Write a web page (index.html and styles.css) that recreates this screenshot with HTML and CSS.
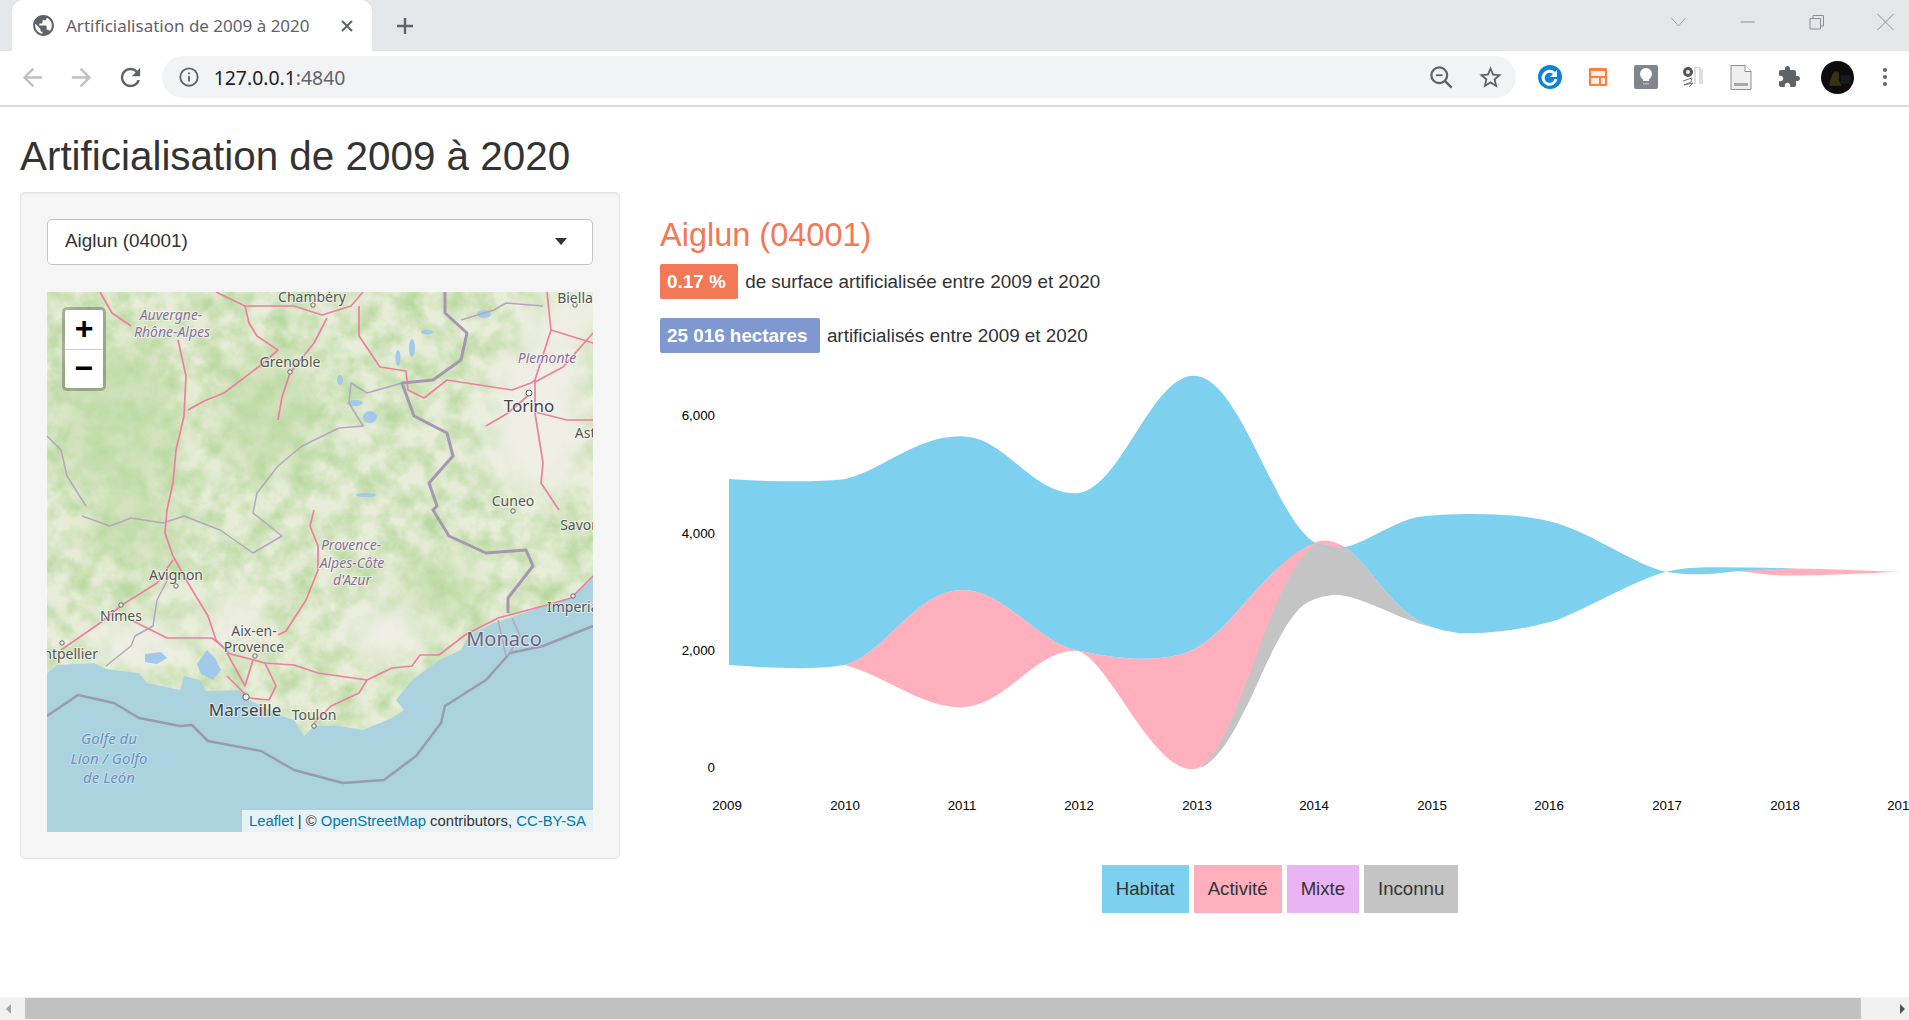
FILE: index.html
```html
<!DOCTYPE html>
<html>
  <head>
    <meta charset="utf-8">
    <title>Artificialisation de 2009 à 2020</title>
    <link rel="stylesheet" href="styles.css">
  </head>
  <body>
    <div class="browser">
      <div class="tabstrip">
        <div class="tab">
          <svg class="favicon" viewBox="0 0 24 24"><path fill="#5f6368" d="M12 2C6.48 2 2 6.48 2 12s4.48 10 10 10 10-4.48 10-10S17.52 2 12 2zm-1 17.93c-3.95-.49-7-3.85-7-7.93 0-.62.08-1.21.21-1.79L9 15v1c0 1.1.9 2 2 2v1.93zm6.9-2.54c-.26-.81-1-1.39-1.9-1.39h-1v-3c0-.55-.45-1-1-1H8v-2h2c.55 0 1-.45 1-1V7h2c1.1 0 2-.9 2-2v-.41c2.93 1.19 5 4.06 5 7.41 0 2.08-.8 3.97-2.1 5.39z"/></svg>
          <span class="tab-title">Artificialisation de 2009 à 2020</span>
          <svg class="tab-close" viewBox="0 0 14 14"><path d="M2 2l10 10M12 2L2 12" stroke="#5f6368" stroke-width="2" fill="none"/></svg>
        </div>
        <svg class="new-tab" viewBox="0 0 20 20"><path d="M10 2v16M2 10h16" stroke="#5f6368" stroke-width="2.4" fill="none"/></svg>
        <div class="window-controls">
          <svg viewBox="0 0 16 16"><path d="M1 4l7 8 7-8" stroke="#9aa0a6" fill="none"/></svg>
          <svg viewBox="0 0 16 16"><path d="M1 8h14" stroke="#8a8f94" fill="none"/></svg>
          <svg viewBox="0 0 16 16"><path d="M1.5 4.5h10.500v10.500h-10.500zM4.500 4.500v-3h10.500v10.500h-3" stroke="#8a8f94" fill="none"/></svg>
          <svg viewBox="0 0 16 16"><path d="M0 0l16 16M16 0L0 16" stroke="#8a8f94" fill="none"/></svg>
        </div>
      </div>

      <div class="toolbar">
        <div class="nav-btn"><svg viewBox="0 0 24 24"><path fill="#bdc1c6" d="M20 11H7.830l5.590-5.590L12 4l-8 8 8 8 1.410-1.410L7.830 13H20v-2z"/></svg></div>
        <div class="nav-btn"><svg viewBox="0 0 24 24"><path fill="#bdc1c6" d="M4 11h12.170l-5.590-5.590L12 4l8 8-8 8-1.410-1.410L16.170 13H4v-2z"/></svg></div>
        <div class="nav-btn"><svg viewBox="0 0 24 24"><path fill="#5f6368" d="M17.650 6.350C16.200 4.900 14.210 4 12 4c-4.420 0-7.990 3.580-7.990 8s3.570 8 7.990 8c3.730 0 6.840-2.550 7.730-6h-2.080c-.82 2.330-3.040 4-5.650 4-3.310 0-6-2.690-6-6s2.690-6 6-6c1.660 0 3.140.69 4.220 1.780L13 11h7V4l-2.350 2.350z"/></svg></div>
        <div class="omnibox">
          <svg class="info-icon" viewBox="0 0 24 24"><circle cx="12" cy="12" r="9.500" stroke="#5f6368" stroke-width="2" fill="none"/><path d="M11 11h2v6h-2zM11 7h2v2h-2z" fill="#5f6368"/></svg>
          <span class="url">127.0.0.1<span class="url-port">:4840</span></span>
          <span class="omni-spacer"></span>
          <svg class="omni-icon" viewBox="0 0 24 24"><circle cx="10" cy="10" r="7" stroke="#5f6368" stroke-width="2" fill="none"/><path d="M15 15l6 6" stroke="#5f6368" stroke-width="2.200"/><path d="M7 9.200h6v1.600H7z" fill="#5f6368"/></svg>
          <svg class="omni-icon" viewBox="0 0 24 24"><path fill="#5f6368" d="M22 9.240l-7.190-.62L12 2 9.190 8.630 2 9.240l5.460 4.730L5.820 21 12 17.270 18.180 21l-1.630-7.030L22 9.240zM12 15.400l-3.760 2.270 1-4.280-3.320-2.880 4.380-.38L12 6.100l1.710 4.040 4.380.38-3.320 2.880 1 4.280L12 15.400z"/></svg>
        </div>
        <div class="ext-btn"><svg viewBox="0 0 24 28"><circle cx="12" cy="14" r="12" fill="#0a84d8"/><path d="M18 16a6.500 6.500 0 1 1-2-6" stroke="#fff" stroke-width="3" fill="none"/><path d="M19 7v7h-7z" fill="#fff"/></svg></div>
        <div class="ext-btn"><svg viewBox="0 0 24 28"><rect x="3" y="5" width="18" height="18" rx="1" fill="#fb7f3f"/><path d="M5 8h14v5H5zM5 15h8v6H5zM15 15h4v6h-4z" fill="#fdeee6"/></svg></div>
        <div class="ext-btn"><svg viewBox="0 0 24 28"><rect y="2" width="24" height="24" rx="2" fill="#80868b"/><circle cx="12" cy="11" r="6" fill="#fff"/><path d="M9 15h6v3H9z" fill="#fff"/><path d="M9 20h6v1.500H9z" fill="#b4b8bb"/></svg></div>
        <div class="ext-btn"><svg viewBox="0 0 24 28"><circle cx="7" cy="9" r="5" fill="#555"/><circle cx="7" cy="9" r="2" fill="#eee"/><path d="M13 4h6l3 3v14h-9z" fill="#ddd"/><path d="M15 5h3v16h-3z" fill="#fff"/><path d="M2 18l9-3-1 4-7 3 9-2-4 4" stroke="#777" fill="none"/></svg></div>
        <div class="ext-btn"><svg viewBox="0 0 24 28"><path d="M2 2.500h14l6 6v18H2z" fill="#efefef" stroke="#8f8f8f"/><path d="M5 20h14v3H5z" fill="#a8a8a8"/><path d="M16 2.500v6h6" fill="#fff" stroke="#8f8f8f"/></svg></div>
        <div class="ext-btn"><svg viewBox="0 0 24 24"><path fill="#5f6368" d="M20.500 11H19V7c0-1.100-.9-2-2-2h-4V3.500C13 2.120 11.880 1 10.500 1S8 2.120 8 3.500V5H4c-1.100 0-1.990.9-1.990 2v3.800H3.500c1.490 0 2.700 1.210 2.700 2.700s-1.210 2.700-2.700 2.700H2V20c0 1.100.9 2 2 2h3.800v-1.500c0-1.490 1.210-2.700 2.700-2.700 1.490 0 2.700 1.210 2.700 2.700V22H17c1.100 0 2-.9 2-2v-4h1.500c1.380 0 2.500-1.120 2.500-2.500S21.880 11 20.500 11z"/></svg></div>
        <div class="ext-btn"><svg class="avatar" viewBox="0 0 32 32"><circle cx="16" cy="16" r="16" fill="#0c0c0c"/><path d="M8 24c1-6 3-14 7-14 3 0 3 5 2 8l3 6z" fill="#3a3014"/><path d="M19 14h10v8H19z" fill="#121c26"/></svg></div>
        <div class="ext-btn"><svg viewBox="0 0 24 24"><circle cx="12" cy="5" r="2" fill="#5f6368"/><circle cx="12" cy="12" r="2" fill="#5f6368"/><circle cx="12" cy="19" r="2" fill="#5f6368"/></svg></div>
      </div>

      <div class="page">
        <h1>Artificialisation de 2009 à 2020</h1>
        <div class="main">
          <div class="side-card">
            <div class="commune-select">
              <span>Aiglun (04001)</span>
              <span class="caret"></span>
            </div>
            <div class="map">
              <svg class="map-svg" viewBox="0 0 546 540">
                <defs>
                  <clipPath id="land-clip">
                    <path d="M0 0H546V283L524 306 500 313 447 331 422 343 414 358 392 368 365 388 349 408 357 418 345 426 316 438 292 434 267 434 257 444 247 428 235 424 202 408 194 398 159 399 153 388 137 384 133 398 100 391 92 381 59 377 47 371 10 373 0 381Z"/>
                  </clipPath>
                  <filter id="terrain" x="0" y="0" width="100%" height="100%" color-interpolation-filters="sRGB">
                    <feTurbulence type="fractalNoise" baseFrequency="0.045" numOctaves="5" seed="7"/>
                    <feColorMatrix values="0 0 0 0 0.72  0 0 0 0 0.85  0 0 0 0 0.62  1.900 0 0 0 -0.600"/>
                  </filter>
                  <filter id="soft"><feGaussianBlur stdDeviation="0.45"/></filter>
                  <filter id="fog"><feGaussianBlur stdDeviation="16"/></filter>
                </defs>

                <rect width="546" height="540" fill="#aad3df"/>
                <g clip-path="url(#land-clip)">
                  <rect width="546" height="540" fill="#e8edd9"/>
                  <g filter="url(#fog)" fill="#c5dcab" opacity="0.7">
                    <ellipse cx="70" cy="130" rx="60" ry="80"/>
                    <ellipse cx="220" cy="120" rx="50" ry="60"/>
                    <ellipse cx="90" cy="240" rx="50" ry="30"/>
                    <ellipse cx="390" cy="300" rx="40" ry="30"/>
                  </g>
                  <rect width="546" height="540" filter="url(#terrain)"/>
                  <g filter="url(#fog)" fill="#f0efe6">
                    <ellipse cx="490" cy="130" rx="50" ry="80"/>
                    <ellipse cx="520" cy="30" rx="40" ry="30"/>
                    <ellipse cx="90" cy="350" rx="50" ry="24"/>
                    <ellipse cx="340" cy="340" rx="44" ry="26"/>
                    <ellipse cx="190" cy="330" rx="30" ry="30"/>
                  </g>
                </g>

                <g class="map-water" filter="url(#soft)">
                  <path d="M150 372l10-14 8 8 6 12-8 10-12-6z"/>
                  <path d="M98 362l16-2 6 6-10 6-12-2z"/>
                  <ellipse cx="365" cy="56" rx="3" ry="9"/>
                  <ellipse cx="351" cy="66" rx="2.500" ry="8"/>
                  <ellipse cx="380" cy="40" rx="6" ry="2.500"/>
                  <ellipse cx="308" cy="111" rx="8" ry="3"/>
                  <ellipse cx="323" cy="125" rx="7" ry="6"/>
                  <ellipse cx="437" cy="22" rx="7" ry="4"/>
                  <ellipse cx="293" cy="88" rx="3" ry="5"/>
                  <ellipse cx="319" cy="203" rx="10" ry="2"/>
                </g>

                <g class="map-border-thin" filter="url(#soft)">
                  <path d="M355 91L320 101 304 91 302 111 316 134 292 136 255 154 231 174 210 201 206 221 235 244 206 261 173 238 137 224 116 231 84 226 63 234 35 224"/>
                  <path d="M0 144L14 158 20 184 39 214"/>
                  <path d="M124 281L110 308 106 334 88 344 84 354 59 374"/>
                  <path d="M414 28L447 18 459 11 496 14"/>
                  <path d="M0 424L31 403 67 411 92 426 133 434 145 433 161 449 214 459 247 478 296 491 337 488 369 464 394 431 398 414 439 388 463 361 496 354 546 334" class="map-sea-line"/>
                  <path d="M451 328L459 364M465 326L473 344 461 364"/>
                </g>

                <g class="map-border" filter="url(#soft)">
                  <path d="M398 0L398 21 420 41 414 68 386 88 355 91 367 124 400 141 406 164 382 191 390 214 386 218 402 244 439 261 479 258 486 274 461 306 461 321"/>
                </g>

                <g class="map-roads" filter="url(#soft)">
                  <path d="M53 0L65 21 84 34"/>
                  <path d="M169 0L198 14 247 14 275 23 304 14 316 0"/>
                  <path d="M198 14L202 31 210 44 231 58 214 73 177 101 157 109 141 118"/>
                  <path d="M280 26L267 51 243 81 235 105 231 128"/>
                  <path d="M312 14L312 44 333 75 359 79 361 98 377 106 400 88 465 98 484 91 488 88 504 38 500 0"/>
                  <path d="M131 48L139 84 137 124 129 158 126 191 120 218 118 241 126 264 141 291 161 324 169 348 182 361"/>
                  <path d="M488 88L488 121 496 171 494 191 512 218"/>
                  <path d="M439 134L461 121 484 101M488 120L520 128 546 128M488 90L516 75 546 41M504 38L546 51"/>
                  <path d="M14 358L53 331 75 313 110 291 126 268"/>
                  <path d="M86 329L120 346 165 346 180 358"/>
                  <path d="M231 343L239 339 259 308 271 278 271 254 263 234 267 218"/>
                  <path d="M180 361L218 371 247 373 271 381 320 388 345 376 365 374 373 363 392 363 418 343 451 326 500 313 524 306 546 284"/>
                  <path d="M320 388L312 401 284 414 267 431"/>
                  <path d="M180 361L198 394 206 368M218 371L229 394 222 408 202 406 180 384"/>
                </g>

                <g class="map-dots">
                  <circle cx="266" cy="13" r="2.200"/><circle cx="528" cy="13" r="2.200"/>
                  <circle cx="243" cy="80" r="2.200"/><circle cx="482" cy="101" r="3"/>
                  <circle cx="129" cy="294" r="2.200"/><circle cx="74" cy="313" r="2.200"/>
                  <circle cx="15" cy="351" r="2.200"/><circle cx="208" cy="364" r="2.200"/>
                  <circle cx="199" cy="405" r="3.200"/><circle cx="267" cy="434" r="2.200"/>
                  <circle cx="526" cy="304" r="2.200"/><circle cx="466" cy="219" r="2.200"/>
                </g>

                <g class="map-city">
                  <text x="265" y="10">Chambéry</text>
                  <text x="528" y="11">Biella</text>
                  <text x="243" y="75">Grenoble</text>
                  <text x="466" y="214">Cuneo</text>
                  <text x="540" y="146">Asti</text>
                  <text x="537" y="238">Savona</text>
                  <text x="129" y="288">Avignon</text>
                  <text x="74" y="329">Nîmes</text>
                  <text x="207" y="344">Aix-en-</text>
                  <text x="207" y="360">Provence</text>
                  <text x="51" y="367" class="map-end">Montpellier</text>
                  <text x="500" y="320" class="map-start">Imperia</text>
                  <text x="267" y="428">Toulon</text>
                  <text x="482" y="120" class="map-city-big">Torino</text>
                  <text x="198" y="424" class="map-city-big">Marseille</text>
                  <text x="457" y="354" class="map-monaco">Monaco</text>
                </g>
                <g class="map-region">
                  <text x="124" y="28">Auvergne-</text>
                  <text x="125" y="45">Rhône-Alpes</text>
                  <text x="500" y="71">Piemonte</text>
                  <text x="304" y="258">Provence-</text>
                  <text x="305" y="276">Alpes-Côte</text>
                  <text x="305" y="293">d'Azur</text>
                </g>
                <g class="map-sea">
                  <text x="62" y="452">Golfe du</text>
                  <text x="62" y="472">Lion / Golfo</text>
                  <text x="62" y="491">de León</text>
                </g>
              </svg>
              <div class="zoom-control">
                <div class="zoom-btn">+</div>
                <div class="zoom-btn">−</div>
              </div>
              <div class="attribution"><a>Leaflet</a> | © <a>OpenStreetMap</a> contributors, <a>CC-BY-SA</a></div>
            </div>
          </div>

          <div class="content">
            <h3>Aiglun (04001)</h3>
            <div class="stat"><span class="badge badge-coral">0.17 %</span>de surface artificialisée entre 2009 et 2020</div>
            <div class="stat"><span class="badge badge-blue">25 016 hectares</span>artificialisés entre 2009 et 2020</div>

            <svg class="stream" viewBox="660 360 1290 470" width="1290" height="470">
              <path class="area-gray" d="M1202 767.300C1225 755 1240 718 1250 700C1270 655 1290 610 1309 601.700C1318 597 1328 595 1336 595C1360 595 1400 620 1431 626.700C1395 615 1370 565 1347 548.500L1315 542.700C1280 540 1190 680 1195 755L1202 767.300Z"/>
              <path class="area-pink" d="M844 665C885 655 915 590 963 590C1005 590 1040 645 1079 650.700C1105 656 1125 659 1145 658.700C1170 658 1185 655 1198 646.700C1235 625 1270 560 1315 542.700C1322 539 1332 539 1347 548.500C1335 549 1325 546 1315 542.700C1285 570 1268 625 1250 673C1235 710 1215 770 1192 769.300C1150 769 1105 651 1075 650.700C1035 650 1005 707 961 707.300C920 707 885 675 844 665Z"/>
              <path class="area-pink" d="M1737 571C1760 570 1780 568.500 1795 568.500C1830 569 1870 571 1901 571.700C1870 573 1820 575.500 1788 575.500C1770 575.500 1755 573 1737 571Z"/>
              <path class="area-blue" d="M729 479C760 481 810 483 844 479.300C880 472 915 436 961 436.300C1005 436 1030 493 1075 493.300C1120 493 1150 376 1194 375.700C1240 376 1275 520 1315 542.700C1322 546 1330 549 1338 548.300C1365 546 1395 518 1426 516C1460 513 1520 512 1557 523.300C1595 535 1635 565 1666 571.700C1685 567 1705 567 1725 567.300C1750 567.500 1775 568 1795 568.500C1780 569 1760 570 1740 571C1725 572.500 1715 574 1700 574.300C1690 574.500 1680 574 1666 571.700C1635 580 1590 607 1557 620C1530 628 1500 633 1470 633.300C1455 633.500 1445 631 1431 626.700C1395 615 1370 565 1347 548.500C1335 549 1325 546 1315 542.700C1270 560 1235 625 1198 646.700C1185 655 1170 658 1145 658.700C1125 659 1105 656 1079 650.700C1040 645 1005 590 963 590C915 590 885 655 844 665C810 671 760 667 729 665Z"/>

              <g class="axis-y">
                <text x="715" y="420">6,000</text>
                <text x="715" y="538">4,000</text>
                <text x="715" y="655">2,000</text>
                <text x="715" y="772">0</text>
              </g>
              <g class="axis-x">
                <text x="727" y="810">2009</text>
                <text x="845" y="810">2010</text>
                <text x="962" y="810">2011</text>
                <text x="1079" y="810">2012</text>
                <text x="1197" y="810">2013</text>
                <text x="1314" y="810">2014</text>
                <text x="1432" y="810">2015</text>
                <text x="1549" y="810">2016</text>
                <text x="1667" y="810">2017</text>
                <text x="1785" y="810">2018</text>
                <text x="1902" y="810">2019</text>
              </g>
            </svg>

            <div class="legend">
              <span class="legend-item legend-habitat">Habitat</span>
              <span class="legend-item legend-activite">Activité</span>
              <span class="legend-item legend-mixte">Mixte</span>
              <span class="legend-item legend-inconnu">Inconnu</span>
            </div>
          </div>
        </div>
      </div>

      <div class="hscroll">
        <span class="arrow-left"></span>
        <span class="hscroll-thumb"></span>
        <span class="arrow-right"></span>
      </div>
    </div>
  </body>
</html>
```

FILE: styles.css
```css
* {
  box-sizing: border-box;
}

body {
  margin: 0;
  background-color: #fff;
  color: #333;
  font-family: "Liberation Sans", Arial, sans-serif;
  font-size: 18.6px;
  overflow: hidden;
}

.browser {
  display: flex;
  flex-direction: column;
  height: 100vh;
}

/* browser tabs */
.tabstrip {
  display: flex;
  align-items: center;
  flex: none;
  height: 51px;
  padding-left: 12px;
  background-color: #e4e7ea;
  overflow: hidden;
}

.tab {
  display: flex;
  align-items: center;
  width: 360px;
  height: 51px;
  padding-left: 19px;
  background-color: #fff;
  border-radius: 12px 12px 0 0;
}

.favicon {
  width: 25px;
  height: 25px;
  flex: none;
}

.tab-title {
  margin-left: 10px;
  width: 272px;
  font-family: "Noto Sans", sans-serif;
  font-size: 17px;
  color: #5f6368;
  white-space: nowrap;
}

.tab-close {
  width: 14px;
  height: 14px;
  margin-left: 2px;
}

.new-tab {
  width: 20px;
  height: 20px;
  margin-left: 23px;
}

.window-controls {
  display: flex;
  margin-left: auto;
  margin-right: -11px;
}

.window-controls svg {
  width: 69px;
  height: 16px;
  margin-bottom: 8px;
}

/* address bar */
.toolbar {
  display: flex;
  align-items: center;
  flex: none;
  height: 56px;
  padding: 0 0 2px 8px;
  background-color: #fff;
  border-bottom: 2px solid #dcdcdc;
}

.nav-btn {
  display: flex;
  justify-content: center;
  width: 49px;
}

.nav-btn svg {
  width: 29px;
  height: 29px;
}

.omnibox {
  display: flex;
  align-items: center;
  width: 1357px;
  height: 42px;
  margin: 0 10px 0 7px;
  padding: 0 12px 0 16px;
  background-color: #f1f3f4;
  border-radius: 21px;
}

.info-icon {
  width: 22px;
  height: 22px;
}

.url {
  margin-left: 14px;
  font-family: "Noto Sans", sans-serif;
  font-size: 19.4px;
  color: #202124;
}

.url-port {
  color: #5f6368;
}

.omni-spacer {
  flex: 1;
}

.omni-icon {
  width: 27px;
  height: 27px;
  margin-left: 22px;
}

.ext-btn {
  display: flex;
  justify-content: center;
  width: 48px;
}

.ext-btn svg {
  width: 24px;
  height: 28px;
}

.ext-btn .avatar {
  width: 33px;
  height: 33px;
}

/* page */
.page {
  flex: 1;
  min-height: 0;
  padding-left: 20px;
  overflow: hidden;
}

h1 {
  margin: 27px 0 14px;
  font-size: 40.4px;
  font-weight: 400;
  line-height: 44px;
}

.main {
  display: flex;
  align-items: flex-start;
  gap: 40px;
}

.side-card {
  flex: none;
  width: 600px;
  padding: 26px;
  background-color: #f5f5f5;
  border: 1px solid #e3e3e3;
  border-radius: 5px;
  box-shadow: inset 0 1px 1px rgba(0, 0, 0, 0.05);
}

.commune-select {
  display: flex;
  align-items: center;
  justify-content: space-between;
  height: 46px;
  padding: 0 25px 2px 17px;
  background-color: #fff;
  border: 1px solid #c4c4c4;
  border-radius: 5px;
  font-size: 18.9px;
}

.caret {
  border-left: 6.5px solid transparent;
  border-right: 6.5px solid transparent;
  border-top: 7px solid #333;
}

.map {
  position: relative;
  height: 540px;
  margin-top: 27px;
  overflow: hidden;
}

.map-svg {
  display: block;
  width: 546px;
  height: 540px;
}

.map-water {
  fill: #a3c9ea;
}

.map-roads,
.map-border,
.map-border-thin {
  fill: none;
  stroke-linejoin: round;
}

.map-roads {
  stroke: #ee7f9d;
  stroke-width: 1.7;
}

.map-border {
  stroke: #a597b2;
  stroke-width: 3;
}

.map-border-thin {
  stroke: #b3a7be;
  stroke-width: 1.5;
}

.map-sea-line {
  stroke: #9a9ab4;
  stroke-width: 2.5;
}

.map-dots {
  fill: #f4f3ee;
  stroke: #666;
  stroke-width: 1;
}

.map-city,
.map-region,
.map-sea {
  font-family: "Noto Sans", sans-serif;
  font-size: 14px;
  text-anchor: middle;
  paint-order: stroke;
  stroke: rgba(255, 255, 255, 0.55);
  stroke-width: 2px;
}

.map-city {
  fill: #555;
}

.map-city .map-end {
  text-anchor: end;
}

.map-city .map-start {
  text-anchor: start;
}

.map-city .map-city-big {
  font-size: 17px;
  fill: #444;
}

.map-city .map-monaco {
  font-size: 20px;
  fill: #6f5f7c;
}

.map-region {
  font-style: italic;
  fill: #8b6f9b;
}

.map-sea {
  font-style: italic;
  font-size: 15px;
  fill: #6d8fc2;
  stroke: rgba(255, 255, 255, 0.3);
}

.zoom-control {
  position: absolute;
  top: 15px;
  left: 15px;
  width: 44px;
  background-color: #fff;
  border: 3px solid rgba(0, 0, 0, 0.25);
  border-radius: 5px;
  background-clip: padding-box;
}

.zoom-btn {
  height: 39px;
  font-weight: 700;
  font-size: 32px;
  line-height: 37px;
  text-align: center;
  color: #000;
}

.zoom-btn + .zoom-btn {
  border-top: 1px solid #ccc;
}

.attribution {
  position: absolute;
  right: 0;
  bottom: 0;
  height: 22px;
  padding: 0 7px;
  font-size: 14.9px;
  line-height: 22px;
  background-color: rgba(255, 255, 255, 0.7);
}

.attribution a {
  color: #0078a8;
}

.content {
  flex: none;
  width: 1240px;
}

h3 {
  margin: 26px 0 11px;
  font-size: 32.5px;
  font-weight: 400;
  line-height: 35px;
  color: #f37858;
}

.stat {
  display: flex;
  align-items: center;
  height: 35px;
  margin-bottom: 19px;
  font-size: 18.85px;
  white-space: nowrap;
}

.stat + .stat {
  margin-bottom: 7px;
}

.badge {
  height: 35px;
  margin-right: 7px;
  padding: 0 12.5px 0 7px;
  border-radius: 2px;
  font-weight: 700;
  line-height: 35px;
  color: #fff;
}

.badge-coral {
  background-color: #f37858;
}

.badge-blue {
  background-color: #8098d0;
}

.stream {
  display: block;
  overflow: visible;
}

.area-blue {
  fill: #7dd0ee;
}

.area-pink {
  fill: #ffb0bc;
}

.area-gray {
  fill: #c4c4c4;
}

.axis-y,
.axis-x {
  font-size: 13.3px;
  fill: #000;
}

.axis-y {
  text-anchor: end;
}

.axis-x {
  text-anchor: middle;
}

.legend {
  display: flex;
  justify-content: center;
  gap: 5px;
  margin-top: 35px;
}

.legend-item {
  height: 48px;
  padding: 0 14px;
  line-height: 48px;
}

.legend-habitat {
  background-color: #7dd0ee;
}

.legend-activite {
  background-color: #ffb0bc;
}

.legend-mixte {
  background-color: #e8b4f3;
}

.legend-inconnu {
  background-color: #c4c4c4;
}

/* horizontal scrollbar */
.hscroll {
  display: flex;
  align-items: center;
  flex: none;
  height: 23px;
  padding: 1px 0;
  background-color: #f1f1f1;
}

.arrow-left,
.arrow-right {
  flex: none;
  border-top: 5px solid transparent;
  border-bottom: 5px solid transparent;
}

.arrow-left {
  margin-left: 6px;
  border-right: 5px solid #a3a3a3;
}

.arrow-right {
  margin-right: 2px;
  border-left: 5px solid #505050;
}

.hscroll-thumb {
  width: 1836px;
  height: 21px;
  margin: 0 39px 0 14px;
  background-color: #c1c1c1;
}
```
